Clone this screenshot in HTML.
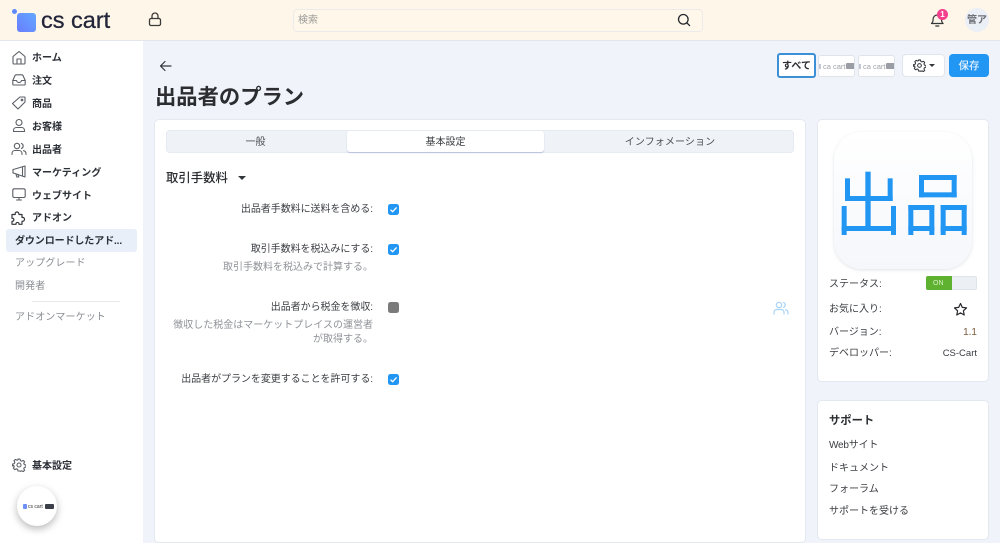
<!DOCTYPE html>
<html lang="ja"><head><meta charset="utf-8"><title>出品者のプラン</title>
<style>
*{box-sizing:border-box}
html,body{margin:0;padding:0}
body{width:1000px;height:543px;overflow:hidden;position:relative;background:#f0f4fa;font-family:"Liberation Sans","Noto Sans CJK JP",sans-serif;color:#333;font-size:10px}
.a{position:absolute;white-space:nowrap;line-height:14px}
.r{text-align:right}
.nav{left:32px;font-weight:700;font-size:10px;color:#2b2f36}
.sub{left:15px;font-size:10px;color:#8a8d93;letter-spacing:.1px}
.ic{position:absolute;fill:none;stroke:#5b5f66;stroke-width:1.1;stroke-linecap:round;stroke-linejoin:round}
.card{position:absolute;background:#fff;border:1px solid #e3e8f1;border-radius:5px}
.lbl{right:627px;font-size:10px;color:#3a3d42;letter-spacing:-.05px}
.hint{right:627px;font-size:10px;color:#8f9297}
.cb{position:absolute;left:388px;width:11px;height:11px;border-radius:2.5px;background:#2196f3}
.cb svg{position:absolute;left:0;top:0}
.k{left:829px;font-size:10px;color:#3a3d42}
.lnk{left:829px;font-size:10px;color:#3a3d42}
.mini{position:absolute;top:55px;width:37px;height:22px;background:#fff;border:1px solid #dfe3ea;border-radius:3px;overflow:hidden;color:#a0a3a8;font-size:7.5px;line-height:21px;padding-left:4px;white-space:nowrap}
.mini i{position:absolute;left:27px;top:7px;width:10px;height:6px;background:#9a9da3;border-radius:1px}
.mini b{position:absolute;left:0;top:8px;width:2px;height:5px;background:#c4c8d2}
</style></head><body>

<!-- header -->
<div style="position:absolute;left:0;top:0;width:1000px;height:41px;background:#fef6e8;border-bottom:1px solid #e3e6ea"></div>
<div style="position:absolute;left:12px;top:9px;width:5px;height:5px;border-radius:50%;background:#5d8bff"></div>
<div style="position:absolute;left:17px;top:13px;width:19px;height:19px;border-radius:3px;background:linear-gradient(45deg,#6a7dff,#62a8ff)"></div>
<div class="a" style="left:41px;top:8px;font-size:23.5px;line-height:25px;color:#23263a;-webkit-text-stroke:.3px #23263a">cs cart</div>
<svg class="ic" style="left:148px;top:12px;stroke:#3a3a3a;stroke-width:1.3" width="14" height="16" viewBox="0 0 14 16"><rect x="1.5" y="6.5" width="11" height="7" rx="1.5"/><path d="M4 6.5V4a3 3 0 0 1 6 0v2.5"/></svg>
<div style="position:absolute;left:293px;top:9px;width:410px;height:23px;background:#fef7ea;border:1px solid #ecebeb;border-radius:4px"></div>
<div class="a" style="left:298px;top:14px;font-size:10px;color:#9a9a98">検索</div>
<svg class="ic" style="left:677px;top:13px;stroke:#26282c;stroke-width:1.3" width="14" height="14" viewBox="0 0 14 14"><circle cx="6.300" cy="6.300" r="4.800"/><path d="M10 10l2.600 2.600"/></svg>
<svg class="ic" style="left:930px;top:12px;stroke:#33353a;stroke-width:1.2" width="15" height="16" viewBox="0 0 15 16"><path d="M1.5 11.5c1.3-1 1.600-2.300 1.600-4.200C3.100 4.600 5 3 7.300 3s4.200 1.600 4.200 4.300c0 1.900.3 3.200 1.600 4.200z"/><path d="M5.800 14h3"/></svg>
<div style="position:absolute;left:937px;top:9px;width:11px;height:11px;border-radius:50%;background:#f43f8c;color:#fff;font-size:8px;line-height:11px;text-align:center;font-weight:700">1</div>
<div style="position:absolute;left:965px;top:8px;width:24px;height:24px;border-radius:50%;background:#ebeff6;color:#6c7076;font-size:10px;line-height:26px;text-align:center;font-weight:700">管ア</div>

<!-- sidebar -->
<div style="position:absolute;left:0;top:41px;width:143px;height:502px;background:#fff"></div>
<svg class="ic" style="left:12px;top:50px" width="14" height="15" viewBox="0 0 14 15"><path d="M1 6.500L7 1.500l6 5V13a1 1 0 0 1-1 1H2a1 1 0 0 1-1-1z"/><path d="M5 14V9h4v5"/></svg>
<div class="a nav" style="top:52px">ホーム</div>
<svg class="ic" style="left:12px;top:74px" width="14" height="12" viewBox="0 0 14 12"><path d="M.8 6.500L3 1.500q.3-.7 1-.7h6q.7 0 1 .7l2.200 5V10a1 1 0 0 1-1 1H1.800a1 1 0 0 1-1-1z"/><path d="M.8 6.500H4.500q.5 2 2.500 2t2.500-2h3.700"/></svg>
<div class="a nav" style="top:75px">注文</div>
<svg class="ic" style="left:12px;top:96px" width="14" height="14" viewBox="0 0 14 14"><path d="M8 1h4.500a.5.500 0 0 1 .5.500V6l-7 7-5.500-5.500z"/><circle cx="10" cy="4" r=".8"/></svg>
<div class="a nav" style="top:98px">商品</div>
<svg class="ic" style="left:12px;top:118px" width="14" height="15" viewBox="0 0 14 15"><circle cx="7" cy="4.500" r="3"/><path d="M1.500 13.500v-1c0-2 1.500-3 3-3h5c1.500 0 3 1 3 3v1z"/></svg>
<div class="a nav" style="top:121px">お客様</div>
<svg class="ic" style="left:11px;top:142px" width="16" height="14" viewBox="0 0 16 14"><circle cx="6" cy="4" r="2.700"/><path d="M1 12.500v-1c0-2 1.500-3 3-3h4c1.500 0 3 1 3 3v1M10.500 1.500a2.700 2.700 0 0 1 0 5M12.500 8.700c1.500.4 2.500 1.300 2.500 2.800v1"/></svg>
<div class="a nav" style="top:144px">出品者</div>
<svg class="ic" style="left:12px;top:165px" width="14" height="13" viewBox="0 0 14 13"><path d="M1 4.500v3.500l2 .5L13 12V1L3 4z"/><path d="M10.500 2v9M4 9l.8 3h2L6 9.800"/></svg>
<div class="a nav" style="top:167px">マーケティング</div>
<svg class="ic" style="left:12px;top:188px" width="14" height="13" viewBox="0 0 14 13"><rect x=".8" y=".8" width="12.400" height="8.700" rx="1.500"/><path d="M7 9.500V12M4.500 12h5"/></svg>
<div class="a nav" style="top:190px">ウェブサイト</div>
<svg class="ic" style="left:11px;top:210px;stroke:#33363b;stroke-width:1.2" width="15" height="15" viewBox="0 0 15 15"><path d="M1 4.500h3.200c-.8-3 4-3.700 3.800 0h3v3c3-.8 3.700 4 0 3.800v3H8c.4-2.500-3.500-2.500-3 0H1v-3c2.500.4 2.500-3.500 0-3z"/></svg>
<div class="a nav" style="top:212px">アドオン</div>
<div style="position:absolute;left:6px;top:229px;width:131px;height:23px;background:#e8eff8;border-radius:3px"></div>
<div class="a" style="left:15px;top:235px;font-size:10px;font-weight:700;color:#2b2f36;letter-spacing:-.1px">ダウンロードしたアド...</div>
<div class="a sub" style="top:257px">アップグレード</div>
<div class="a sub" style="top:280px">開発者</div>
<div style="position:absolute;left:32px;top:301px;width:88px;height:1px;background:#e6e8ec"></div>
<div class="a sub" style="top:311px">アドオンマーケット</div>
<svg class="ic" style="left:12px;top:458px" width="14" height="14" viewBox="0 0 14 14"><circle cx="7" cy="7" r="2"/><path d="M6 1h2l.4 1.600 1.300.6 1.500-.8 1.400 1.400-.8 1.500.5 1.300 1.700.4v2l-1.700.4-.5 1.300.8 1.500-1.400 1.400-1.500-.8-1.300.5L8 13H6l-.4-1.700-1.300-.5-1.500.8-1.400-1.400.8-1.500-.5-1.300L.6 8V6l1.700-.4.5-1.300-.8-1.500 1.400-1.400 1.500.8 1.300-.6z"/></svg>
<div class="a nav" style="top:460px">基本設定</div>
<div style="position:absolute;left:17px;top:486px;width:40px;height:40px;border-radius:50%;background:#fff;box-shadow:0 3px 8px rgba(0,0,0,.28)"></div>
<div style="position:absolute;left:23px;top:504px;width:4px;height:5px;background:#6f8ff5;border-radius:1px"></div>
<div class="a" style="left:28px;top:504px;font-size:5px;line-height:7px;color:#333">cs cart</div>
<div style="position:absolute;left:45px;top:504px;width:9px;height:5px;background:#3a3f4a;border-radius:1px"></div>

<!-- top bar -->
<svg class="ic" style="left:159px;top:60px;stroke:#33363b;stroke-width:1.2" width="13" height="12" viewBox="0 0 13 12"><path d="M12 6H1.500M6 1.500L1.500 6 6 10.500"/></svg>
<div class="a" style="left:155px;top:83px;font-size:21.3px;line-height:29px;font-weight:700;color:#2b2d31">出品者のプラン</div>
<div style="position:absolute;left:777px;top:53px;width:39px;height:25px;background:#fff;border:2px solid #3d8fd6;border-radius:3px;text-align:center;font-size:10px;line-height:23px;font-weight:700;color:#2b2d31">すべて</div>
<div class="mini" style="left:818px"><b></b>ca cart<i></i></div>
<div class="mini" style="left:858px"><b></b>ca cart<i></i></div>
<div style="position:absolute;left:902px;top:54px;width:43px;height:23px;background:#fff;border:1px solid #e1e5ec;border-radius:4px"></div>
<svg class="ic" style="left:913px;top:59px;stroke:#33363b" width="13" height="13" viewBox="0 0 14 14"><circle cx="7" cy="7" r="2"/><path d="M6 1h2l.4 1.600 1.300.6 1.500-.8 1.400 1.400-.8 1.500.5 1.300 1.700.4v2l-1.700.4-.5 1.300.8 1.500-1.400 1.400-1.500-.8-1.300.5L8 13H6l-.4-1.700-1.300-.5-1.500.8-1.400-1.400.8-1.500-.5-1.300L.6 8V6l1.700-.4.5-1.300-.8-1.500 1.400-1.400 1.500.8 1.300-.6z"/></svg>
<div style="position:absolute;left:929px;top:64px;border:3px solid transparent;border-top:3.500px solid #33363b;border-bottom:0"></div>
<div style="position:absolute;left:949px;top:54px;width:40px;height:23px;background:#2196f3;border-radius:4px;color:#e8f3fd;font-size:10.500px;line-height:25px;text-align:center;font-weight:500">保存</div>

<!-- main card -->
<div class="card" style="left:154px;top:119px;width:652px;height:424px"></div>
<div style="position:absolute;left:166px;top:130px;width:628px;height:23px;background:#eff2f7;border:1px solid #e6eaf1;border-radius:4px"></div>
<div style="position:absolute;left:347px;top:131px;width:197px;height:21px;background:#fff;border-radius:3px;box-shadow:0 1px 1px rgba(120,140,190,.45)"></div>
<div class="a" style="left:165px;width:181px;top:136px;text-align:center;color:#4a4d52">一般</div>
<div class="a" style="left:347px;width:197px;top:136px;text-align:center;color:#3a3d42">基本設定</div>
<div class="a" style="left:546px;width:248px;top:136px;text-align:center;color:#4a4d52;letter-spacing:.1px">インフォメーション</div>
<div class="a" style="left:166px;top:170px;font-size:12.400px;line-height:17px;font-weight:500;color:#2b2d31">取引手数料</div>
<div style="position:absolute;left:238px;top:176px;border:4px solid transparent;border-top:4px solid #33363b;border-bottom:0"></div>

<div class="a r lbl" style="top:203px">出品者手数料に送料を含める:</div>
<div class="cb" style="top:204px"><svg width="11" height="11" viewBox="0 0 11 11"><path d="M2.500 5.700l2.100 2 4-4.300" fill="none" stroke="#fff" stroke-width="1.300"/></svg></div>
<div class="a r lbl" style="top:243px">取引手数料を税込みにする:</div>
<div class="cb" style="top:244px"><svg width="11" height="11" viewBox="0 0 11 11"><path d="M2.500 5.700l2.100 2 4-4.300" fill="none" stroke="#fff" stroke-width="1.300"/></svg></div>
<div class="a r hint" style="top:261px">取引手数料を税込みで計算する。</div>
<div class="a r lbl" style="top:301px">出品者から税金を徴収:</div>
<div class="cb" style="top:302px;background:#7b7b7b"></div>
<div class="a r hint" style="top:319px">徴収した税金はマーケットプレイスの運営者</div>
<div class="a r hint" style="top:333px">が取得する。</div>
<div class="a r lbl" style="top:373px">出品者がプランを変更することを許可する:</div>
<div class="cb" style="top:374px"><svg width="11" height="11" viewBox="0 0 11 11"><path d="M2.500 5.700l2.100 2 4-4.300" fill="none" stroke="#fff" stroke-width="1.300"/></svg></div>
<svg class="ic" style="left:773px;top:301px;stroke:#a9d3f7;stroke-width:1.200" width="16" height="14" viewBox="0 0 16 14"><circle cx="6" cy="4" r="2.700"/><path d="M1 13v-1.500c0-2 1.500-3 3-3h4c1.500 0 3 1 3 3V13M10.500 1.500a2.700 2.700 0 0 1 0 5M12.500 8.700c1.500.4 2.500 1.300 2.500 2.800V13"/></svg>

<!-- side card -->
<div class="card" style="left:817px;top:119px;width:172px;height:263px"></div>
<div style="position:absolute;left:834px;top:132px;width:138px;height:137px;border-radius:28px;background:linear-gradient(#fff,#f5f7fb);box-shadow:0 1px 3px rgba(150,160,180,.3)"></div>
<svg style="position:absolute;left:810px;top:120px" width="190" height="270" viewBox="0 0 570 810" fill="#2196f3">
<rect x="105" y="175" width="15" height="68"/><rect x="233" y="175" width="15" height="68"/><rect x="105" y="228" width="143" height="15"/><rect x="166" y="155" width="16" height="175"/><rect x="95" y="258" width="15" height="87"/><rect x="243" y="258" width="15" height="87"/><rect x="95" y="318" width="163" height="15"/>
<rect x="327" y="165" width="15" height="67"/><rect x="425" y="165" width="15" height="67"/><rect x="327" y="165" width="113" height="15"/><rect x="327" y="217" width="113" height="15"/>
<rect x="295" y="255" width="15" height="90"/><rect x="358" y="255" width="15" height="90"/><rect x="295" y="255" width="78" height="15"/><rect x="295" y="318" width="78" height="15"/>
<rect x="392" y="255" width="15" height="90"/><rect x="455" y="255" width="15" height="90"/><rect x="392" y="255" width="78" height="15"/><rect x="392" y="318" width="78" height="15"/>
</svg>
<div class="a k" style="top:278px">ステータス:</div>
<div style="position:absolute;left:926px;top:276px;width:51px;height:14px;background:#eceff4;border:1px solid #dfe3ea;border-radius:2px"></div>
<div style="position:absolute;left:926px;top:276px;width:26px;height:14px;background:#5fb22f;border-radius:2px 0 0 2px;color:#d9f0c9;font-size:7px;line-height:15px;padding-left:7px">ON</div>
<div class="a k" style="top:303px">お気に入り:</div>
<svg class="ic" style="left:953px;top:302px;stroke:#26282c;stroke-width:1.200" width="15" height="15" viewBox="0 0 15 15"><path d="M7.500 1.500l1.800 3.900 4.200.5-3.100 2.900.8 4.200-3.700-2.100-3.700 2.100.8-4.200L1.500 5.900l4.200-.5z"/></svg>
<div class="a k" style="top:326px">バージョン:</div>
<div class="a r" style="right:23px;top:326px;color:#7a5a3a">1.1</div>
<div class="a k" style="top:347px">デベロッパー:</div>
<div class="a r" style="right:23px;top:347px;font-size:9.500px;color:#3a3d42">CS-Cart</div>

<!-- support -->
<div class="card" style="left:817px;top:400px;width:172px;height:140px"></div>
<div class="a" style="left:829px;top:414px;font-size:11.300px;font-weight:700;color:#2b2d31">サポート</div>
<div class="a lnk" style="top:439px;letter-spacing:-.2px">Webサイト</div>
<div class="a lnk" style="top:462px">ドキュメント</div>
<div class="a lnk" style="top:483px">フォーラム</div>
<div class="a lnk" style="top:505px">サポートを受ける</div>
</body></html>
